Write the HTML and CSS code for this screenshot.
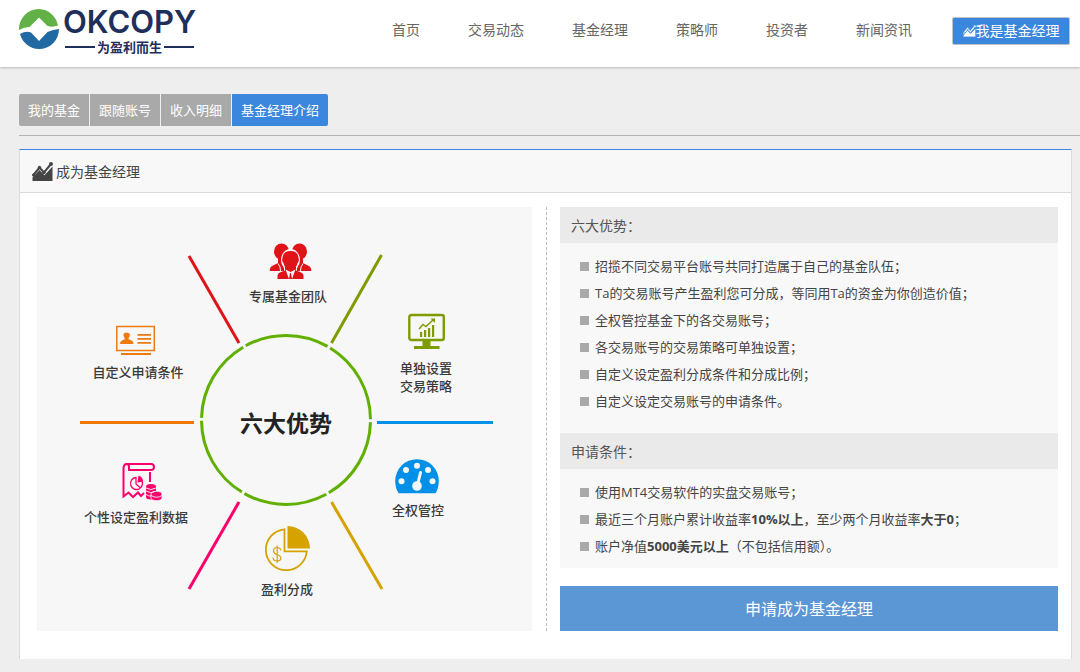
FILE: index.html
```html
<!DOCTYPE html>
<html lang="zh-CN">
<head>
<meta charset="utf-8">
<title>OKCOPY</title>
<meta name="viewport" content="width=device-width, initial-scale=1">
<link rel="stylesheet" href="styles.css">
</head>
<body>
<svg class="defs" aria-hidden="true">
  <symbol id="chart" viewBox="0 0 21 19">
    <path d="M0.500 19V15.500L7.500 8 12.500 13.200 20.500 4.500V19z" fill="currentColor"/>
    <path class="chart-gap" d="M0 16.500L7.500 8.200 12.300 13.200 20.500 4.200" fill="none" stroke-width="1.500"/>
    <path d="M1 13.500L7.500 5.500 12 10.500 19 2" fill="none" stroke="currentColor" stroke-width="2"/>
    <circle cx="7.500" cy="5.500" r="1.700" fill="currentColor"/>
    <circle cx="12" cy="10.500" r="1.700" fill="currentColor"/>
    <circle cx="19" cy="2" r="2" fill="currentColor"/>
    <circle cx="1.500" cy="13" r="1.500" fill="currentColor"/>
  </symbol>
</svg>

<header class="header">
  <a class="brand" href="#">
    <svg class="brand-mark" viewBox="0 0 40 40" aria-hidden="true">
      <path d="M0 21A20 20 0 0 1 20 0 20 20 0 0 1 39 16.500Q34 18.500 28.500 17L20 8.500 11.500 17 10.500 18Q5 18 0 21z" fill="#62b146"/>
      <path d="M1 25Q7 21.500 12 23.500L20 32 28.500 23Q34 20.500 40 20A20 20 0 0 1 20 40 20 20 0 0 1 1 25z" fill="#2169a3"/>
    </svg>
    <span class="brand-text">
      <span class="brand-name">OKCOPY</span>
      <span class="brand-slogan">为盈利而生</span>
    </span>
  </a>
  <nav class="menu">
    <a href="#">首页</a>
    <a href="#">交易动态</a>
    <a href="#">基金经理</a>
    <a href="#">策略师</a>
    <a href="#">投资者</a>
    <a href="#">新闻资讯</a>
  </nav>
  <button class="manager-button" type="button"><svg aria-hidden="true"><use href="#chart"/></svg>我是基金经理</button>
</header>

<main class="main">
  <div class="tab-bar">
    <nav class="tabs">
      <a href="#">我的基金</a>
      <a href="#">跟随账号</a>
      <a href="#">收入明细</a>
      <a href="#" class="active" aria-current="page">基金经理介绍</a>
    </nav>
  </div>

  <section class="card">
    <h1 class="card-title"><svg aria-hidden="true"><use href="#chart"/></svg>成为基金经理</h1>
    <div class="card-body">
      <div class="diagram">
        <svg viewBox="0 0 495 424" role="img" aria-label="六大优势">
          <g fill="none" stroke-width="3">
            <circle cx="249" cy="213" r="84.500" pathLength="360" stroke="#61b000" stroke-dasharray="58 2" stroke-dashoffset="-1.500"/>
            <path d="M152 49L202 136" stroke="#e01319"/>
            <path d="M344.500 48L294.500 136" stroke="#7e9c00"/>
            <path d="M340 215.500H456" stroke="#0090e8"/>
            <path d="M294.500 295L345 382" stroke="#d5a200"/>
            <path d="M202 295L152 382" stroke="#fb006c"/>
            <path d="M43 215.500H157" stroke="#ee7700"/>
          </g>

          <g transform="translate(232 36)" fill="#e01319">
            <ellipse cx="12.500" cy="8.500" rx="7.500" ry="8"/>
            <ellipse cx="30.500" cy="8.500" rx="7.500" ry="8"/>
            <path d="M0.700 28Q0.700 23.500 4 22.500L9 20V14H15V28z"/>
            <path d="M42.300 28Q42.300 23.500 39 22.500L34 20V14H28V28z"/>
            <path d="M9 20.500L11 24 11.500 28M34 20.500L32 24 31.500 28" stroke="#f7f7f7" fill="none"/>
            <path d="M13 28H30V33H13z" fill="#f7f7f7"/>
            <ellipse cx="21.500" cy="17" rx="9.500" ry="11" fill="#f7f7f7"/>
            <path d="M13.500 15Q14 8 21.500 8T29.500 15Q30.500 18 28.800 19.500 27 26.500 21.500 26.500T14.200 19.500Q12.500 18 13.500 15z"/>
            <path d="M8.500 36V33Q8.500 30 12 29L16 27.500V24H27V27.500L31 29Q34.500 30 34.500 33V36z"/>
            <path d="M16.500 26.500L20 36 21 30H22L23 36 26.500 26.500 21.500 29z" fill="#f7f7f7"/>
          </g>

          <g transform="translate(79 118)" fill="#ee7a10">
            <rect x="0.800" y="1.500" width="37.500" height="24" fill="none" stroke="#ee7a10" stroke-width="1.500"/>
            <rect x="5" y="28" width="30" height="2"/>
            <path d="M4 19Q4 16 7 15L9 14Q7 11 7.500 9 8 7.500 10.500 7.500T13.800 9Q14.500 11 12.300 14L14.500 15Q17.500 16 17.500 19z"/>
            <path d="M21.500 9.800H35M21.500 13.800H35M21.500 17.800H35" stroke="#ee7a10" stroke-width="1.800"/>
          </g>

          <g transform="translate(371 106)" fill="#7e9c00">
            <rect x="1.300" y="2" width="34.500" height="25" rx="2" fill="none" stroke="#7e9c00" stroke-width="2.400"/>
            <path d="M14.500 28H22.500V33H31.500V36H6V33H14.500z"/>
            <path d="M12 19H14.200V24H12zM16 17H18.200V24H16zM20 15H22.200V24H20zM24 12H26.200V24H24z"/>
            <path d="M11 16L15 11.500 18 13.500 25 7" fill="none" stroke="#7e9c00" stroke-width="1.500"/>
            <path d="M22.500 5.500H27V10z"/>
          </g>

          <g transform="translate(358 252)">
            <path d="M3.500 34Q0.200 29 0.200 22A21.800 21.800 0 0 1 43.800 22Q43.800 29 40.500 34.300H3.500z" fill="#0090e8"/>
            <g fill="#f7f7f7">
              <circle cx="6.500" cy="22.300" r="3"/><circle cx="11" cy="11" r="3"/><circle cx="22" cy="6.700" r="3"/>
              <circle cx="33" cy="11" r="3"/><circle cx="37.500" cy="22.300" r="3"/><circle cx="22" cy="27" r="4.800"/>
            </g>
            <path d="M22.500 26L25.500 13.500" stroke="#f7f7f7" stroke-width="3" stroke-linecap="round"/>
          </g>

          <g transform="translate(228 318)" fill="none" stroke="#d5a200">
            <path d="M19.500 4.300A20.500 20.500 0 1 0 41.800 26.300H19.500z" stroke-width="1.800"/>
            <path d="M22.500 1A22.500 22.500 0 0 1 45 23.500H22.500z" fill="#d5a200" stroke="none"/>
            <path d="M16 25.500Q15.500 22.500 12 22.500T8.500 26Q8.500 28.500 12 29.500T16 33Q15.800 36 12 36T8 32.500M12.200 20.500V38" stroke-width="1.200"/>
          </g>

          <g transform="translate(85 255)" fill="none" stroke="#fb006c" stroke-width="2">
            <path d="M1.500 6V34.500L6.500 30.500 11 35 16 30.500 19 34 22 31M28 10V20M5 2H29Q32 2 32 5T29 8H7V5Q7 2 4.500 2T1.500 6"/>
            <path d="M19 17.500A6 6 0 1 1 14 15.500V22L18.500 26" stroke-width="1.300"/>
            <path d="M15.500 20.500L16.500 13.500Q21 15 21 19.500z" fill="#fb006c" stroke="none"/>
            <g fill="#fb006c" stroke="none">
              <path d="M24 24.500A5 2.500 0 0 1 34 24.500V35A5 2.500 0 0 1 24 35z"/>
              <path d="M29 32A5.500 2.700 0 0 1 40 32V36A5.500 2.700 0 0 1 29 36z" stroke="#f7f7f7" stroke-width="0.800"/>
            </g>
            <path d="M24 26Q29 29 34 26M24 29Q29 32 33 29.500M24 32.500Q27 34.500 29 34M29 33.500Q34.500 37 40 33.500" stroke="#f7f7f7" stroke-width="0.900"/>
          </g>

          <g class="diagram-label">
            <text x="251" y="94">专属基金团队</text>
            <text x="101" y="170">自定义申请条件</text>
            <text x="389" y="166">单独设置</text>
            <text x="389" y="184">交易策略</text>
            <text x="99" y="315">个性设定盈利数据</text>
            <text x="381" y="308">全权管控</text>
            <text x="250" y="387">盈利分成</text>
          </g>
          <text class="diagram-center" x="249" y="225">六大优势</text>
        </svg>
      </div>

      <div class="info">
        <h2>六大优势：</h2>
        <ul>
          <li>招揽不同交易平台账号共同打造属于自己的基金队伍；</li>
          <li>Ta的交易账号产生盈利您可分成，等同用Ta的资金为你创造价值；</li>
          <li>全权管控基金下的各交易账号；</li>
          <li>各交易账号的交易策略可单独设置；</li>
          <li>自定义设定盈利分成条件和分成比例；</li>
          <li>自定义设定交易账号的申请条件。</li>
        </ul>
        <h2>申请条件：</h2>
        <ul class="conditions">
          <li>使用MT4交易软件的实盘交易账号；</li>
          <li>最近三个月账户累计收益率<strong>10%以上</strong>，至少两个月收益率<strong>大于0</strong>；</li>
          <li>账户净值<strong>5000美元以上</strong>（不包括信用额）。</li>
        </ul>
        <button class="apply" type="button">申请成为基金经理</button>
      </div>
    </div>
  </section>
</main>
</body>
</html>
```
FILE: styles.css
```css
* {
  box-sizing: border-box;
}

body {
  margin: 0;
  background: #eee;
  color: #444;
  font: 14px/20px "Open Sans", "Noto Sans CJK SC", sans-serif;
}

a {
  color: inherit;
  text-decoration: none;
}

button {
  font: inherit;
  cursor: pointer;
}

h1,
h2,
ul {
  margin: 0;
  padding: 0;
  font-weight: 400;
}

.defs {
  display: block;
  width: 0;
  height: 0;
}

.header {
  display: flex;
  align-items: center;
  height: 67px;
  padding: 0 10px 6px 19px;
  background: #fff;
  box-shadow: 0 1px 2px #bbb;
}

.brand {
  display: flex;
  align-items: center;
  gap: 4px;
  margin-bottom: 3px;
  color: #1e2f5c;
}

.brand-mark {
  width: 40px;
  height: 40px;
}

.brand-text {
  display: flex;
  flex-direction: column;
}

.brand-name {
  font: 600 31px/36px Inter, sans-serif;
}

.brand-slogan {
  display: flex;
  align-items: center;
  gap: 2px;
  padding: 0 2px;
  font-size: 13px;
  line-height: 14px;
  font-weight: 700;
}

.brand-slogan::before,
.brand-slogan::after {
  content: "";
  flex: 1;
  height: 2px;
  background: #1e2f5c;
}

.menu {
  display: flex;
  gap: 48px;
  margin-left: auto;
  padding-bottom: 2px;
  color: #666;
}

.manager-button {
  display: flex;
  align-items: center;
  justify-content: center;
  width: 118px;
  height: 28px;
  margin-left: 40px;
  padding: 0;
  border: 1px solid #bfc3c8;
  border-radius: 2px;
  background: #3a87dd;
  color: #fff;
  white-space: nowrap;
}

.manager-button svg {
  width: 13px;
  height: 12px;
  stroke: #3a87dd;
}

.chart-gap {
  stroke: inherit;
}

.main {
  padding: 27px 0 13px 19px;
}

.tab-bar {
  padding-bottom: 9px;
  border-bottom: 1px solid #b3b3b3;
}

.tabs {
  display: flex;
  gap: 1px;
}

.tabs a {
  padding: 0 9px;
  background: #a9a9a9;
  color: #fff;
  font-size: 13px;
  line-height: 32px;
}

.tabs a:first-child {
  border-radius: 2px 0 0 2px;
}

.tabs .active {
  border-radius: 0 2px 2px 0;
  background: #3a87dd;
}

.card {
  margin: 13px 8px 0 0;
  border: 1px solid #dcdcdc;
  border-top-color: #3a87dd;
  border-bottom: 0;
  background: #fff;
}

.card-title {
  display: flex;
  align-items: center;
  gap: 3px;
  height: 43px;
  padding: 2px 12px 0;
  border-bottom: 1px solid #d9d9d9;
  background: #f8f8f8;
  font-size: 14px;
}

.card-title svg {
  width: 21px;
  height: 19px;
  margin-bottom: 2px;
}

.card-body {
  display: grid;
  grid-template-columns: 510fr 511fr;
  padding: 14px 13px 28px 17px;
}

.diagram {
  padding-right: 14px;
  border-right: 1px dashed #bbb;
}

.diagram svg {
  display: block;
  width: 100%;
  background: #f7f7f7;
}

.diagram-label {
  fill: #3a3a3a;
  font-size: 13px;
  font-weight: 500;
  text-anchor: middle;
}

.diagram-center {
  fill: #222;
  font-size: 23px;
  font-weight: 700;
  text-anchor: middle;
}

.info {
  padding-left: 13px;
}

.info h2 {
  padding: 2px 11px 0;
  background: #eaeaea;
  color: #555;
  font-size: 14px;
  line-height: 34px;
}

.info ul {
  padding: 10px 20px 18px;
  background: #f8f8f8;
  font-size: 13px;
  line-height: 27px;
  list-style: none;
}

.info .conditions {
  padding-bottom: 8px;
}

.info li::before {
  content: "";
  display: inline-block;
  width: 9px;
  height: 9px;
  margin-right: 6px;
  background: #a9a9a9;
}

.apply {
  width: 100%;
  height: 45px;
  margin-top: 18px;
  border: 0;
  background: #5b96d5;
  color: #fff;
  font-size: 16px;
}
```
